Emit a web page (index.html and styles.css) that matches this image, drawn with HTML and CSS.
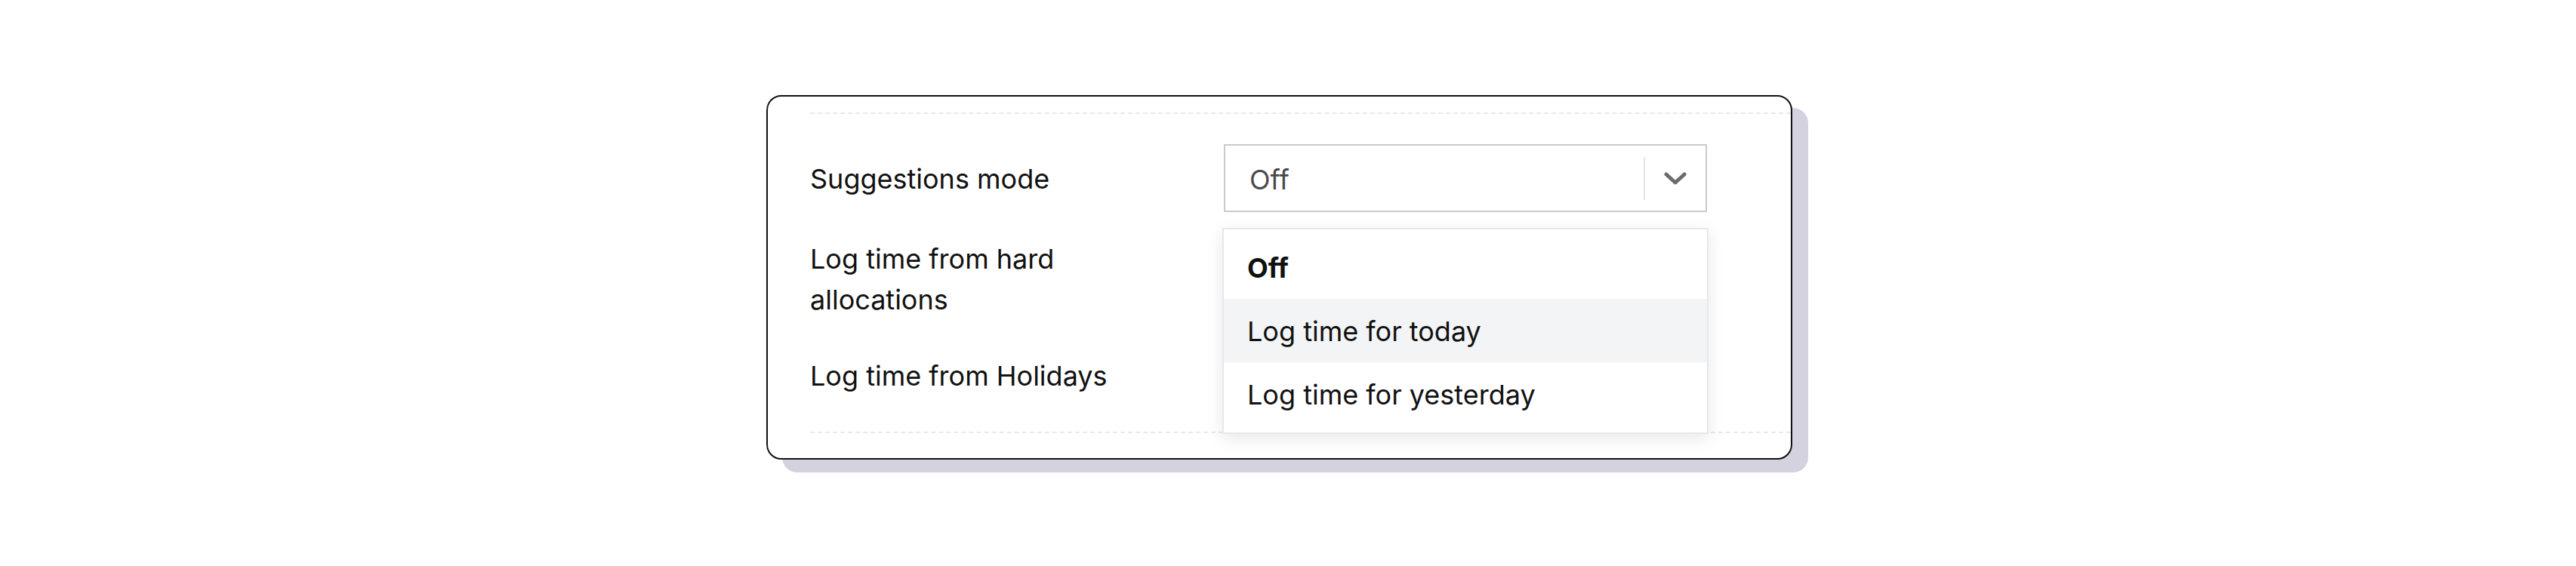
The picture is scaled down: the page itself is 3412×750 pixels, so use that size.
FILE: index.html
```html
<!DOCTYPE html>
<html lang="en">
<head>
<meta charset="utf-8">
<title>Suggestions settings</title>
<link rel="stylesheet" href="styles.css">
</head>
<body>
<div class="stage">
  <div class="card">
    <div class="section">
      <div class="row row-first">
        <div class="label">Suggestions mode</div>
        <div class="select-wrap">
          <div class="select">
            <span class="select-value">Off</span>
            <span class="select-divider"></span>
            <span class="select-arrow">
              <svg width="30" height="18" viewBox="0 0 30 18" aria-hidden="true">
                <path d="M3 3 L15 14 L27 3" fill="none" stroke="#6b6b6b" stroke-width="5" stroke-linecap="round" stroke-linejoin="round"/>
              </svg>
            </span>
          </div>
          <ul class="menu">
            <li class="option option-selected">Off</li>
            <li class="option option-hover">Log time for today</li>
            <li class="option">Log time for yesterday</li>
          </ul>
        </div>
      </div>
      <div class="row row-second">
        <div class="label">Log time from hard<br>allocations</div>
      </div>
      <div class="row row-third">
        <div class="label">Log time from Holidays</div>
      </div>
    </div>
  </div>
</div>
</body>
</html>
```

FILE: styles.css
```css
* { box-sizing: border-box; }

html, body {
  margin: 0;
  padding: 0;
  background: #ffffff;
}

body {
  font-family: Inter, "Noto Sans", "Liberation Sans", sans-serif;
  color: #111111;
}

.stage {
  display: flex;
  justify-content: center;
  padding-top: 126px;
  height: 750px;
}

.card {
  width: 1359px;
  height: 483px;
  margin-right: 23px;
  border: 2px solid #111111;
  border-radius: 20px;
  background: #ffffff;
  box-shadow: 21px 17px 0 0 #d3d2de;
  padding: 21px 0 33px 56px;
}

.section {
  border-top: 2px dashed #e9e9ee;
  border-bottom: 2px dashed #e9e9ee;
  padding: 40px 0 47px 0;
}

.row {
  display: flex;
  align-items: center;
}

.row-second { margin-top: 33px; }
.row-third { margin-top: 45px; }

.label {
  width: 548px;
  font-size: 36px;
  line-height: 54px;
  padding-top: 2px;
  color: #111111;
}

.select-wrap {
  position: relative;
  width: 640px;
}

.select {
  height: 90px;
  border: 2px solid #cacbcf;
  display: flex;
  align-items: center;
  padding-left: 32px;
  background: #ffffff;
}

.select-value {
  flex: 1;
  font-size: 36px;
  padding-top: 3px;
  color: #4a4a4a;
}

.select-divider {
  width: 2px;
  height: 57px;
  background: #e6e6ea;
}

.select-arrow {
  width: 80px;
  display: flex;
  justify-content: center;
  align-items: center;
  padding-top: 2px;
}

.menu {
  position: absolute;
  top: 111px;
  left: -2px;
  width: 644px;
  margin: 0;
  padding: 8px 0 9px 0;
  list-style: none;
  background: #ffffff;
  border: 2px solid #e7e8ec;
  box-shadow: 0 6px 20px rgba(30, 30, 60, 0.10);
}

.option {
  height: 84px;
  display: flex;
  align-items: center;
  padding-left: 31px;
  padding-top: 2px;
  font-size: 36px;
  color: #111111;
}

.option-selected {
  font-weight: 700;
}

.option-hover {
  background: #f3f4f6;
}
```
